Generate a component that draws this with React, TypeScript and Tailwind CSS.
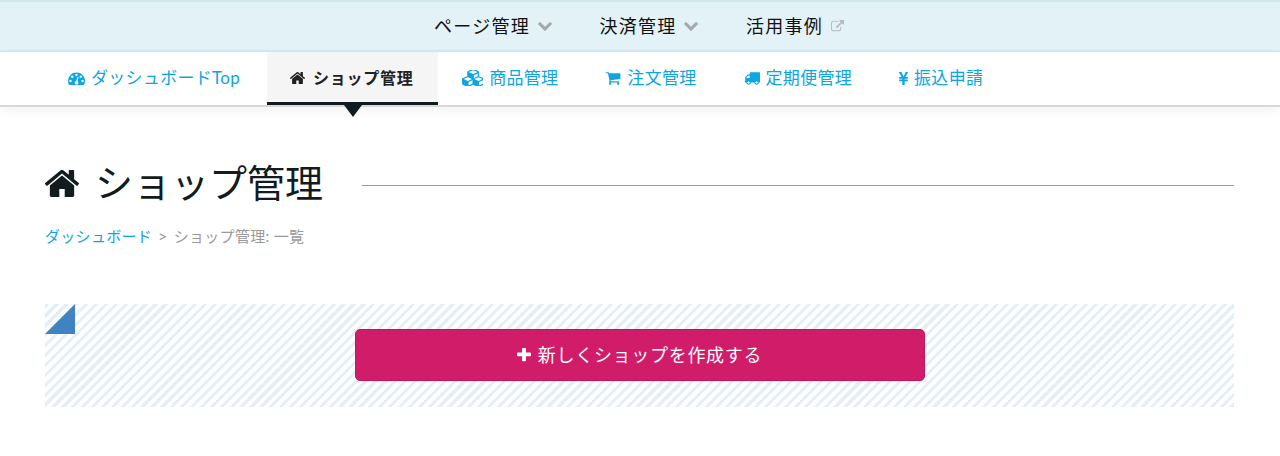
import type { ReactNode } from "react";

const P = {
  home: "M1472 992v480q0 26-19 45t-45 19h-384v-384h-256v384h-384q-26 0-45-19t-19-45v-480q0-1 .5-3t.5-3l575-474 575 474q1 2 1 6zm223-69l-62 74q-8 9-21 11h-3q-13 0-21-7l-692-577-692 577q-12 8-24 7-13-2-21-11l-62-74q-8-10-7-23.5t11-21.5l719-599q32-26 76-26t76 26l244 204v-195q0-14 9-23t23-9h192q14 0 23 9t9 23v408l219 182q10 8 11 21.5t-7 23.5z",
  dash: "M384 1152q0-53-37.5-90.5t-90.5-37.5-90.5 37.5-37.5 90.5 37.5 90.5 90.5 37.5 90.5-37.5 37.5-90.5zm192-448q0-53-37.5-90.5t-90.5-37.5-90.5 37.5-37.5 90.5 37.5 90.5 90.5 37.5 90.5-37.5 37.5-90.5zm428 481l101-382q6-26-7.5-48.5t-38.5-29.5-48 6.5-30 39.5l-101 382q-60 5-107 43.5t-63 98.5q-20 77 20 146t117 89 146-20 89-117q16-60-6-117t-72-91zm660-33q0-53-37.5-90.5t-90.5-37.5-90.5 37.5-37.5 90.5 37.5 90.5 90.5 37.5 90.5-37.5 37.5-90.5zm-640-640q0-53-37.5-90.5t-90.5-37.5-90.5 37.5-37.5 90.5 37.5 90.5 90.5 37.5 90.5-37.5 37.5-90.5zm448 192q0-53-37.5-90.5t-90.5-37.5-90.5 37.5-37.5 90.5 37.5 90.5 90.5 37.5 90.5-37.5 37.5-90.5zm320 448q0 261-141 483-19 29-54 29h-1402q-35 0-54-29-141-221-141-483 0-182 71-348t191-286 286-191 348-71 348 71 286 191 191 286 71 348z",
  cart: "M704 1536q0 52-38 90t-90 38-90-38-38-90 38-90 90-38 90 38 38 90zm896 0q0 52-38 90t-90 38-90-38-38-90 38-90 90-38 90 38 38 90zm128-1088v512q0 24-16.5 42.5t-40.5 21.5l-1044 122q13 60 13 70 0 16-24 64h920q26 0 45 19t19 45-19 45-45 19h-1024q-26 0-45-19t-19-45q0-11 8-31.5t16-36 21.5-40 15.5-29.5l-177-823h-204q-26 0-45-19t-19-45 19-45 45-19h256q16 0 28.5 6.5t19.5 15.5 13 24.5 8 26 5.5 29.5 4.5 26h1201q26 0 45 19t19 45z",
  truck: "M640 1408q0-52-38-90t-90-38-90 38-38 90 38 90 90 38 90-38 38-90zm-384-512h384v-256h-158q-13 0-22 9l-195 195q-9 9-9 22v30zm1280 512q0-52-38-90t-90-38-90 38-38 90 38 90 90 38 90-38 38-90zm256-1088v1024q0 15-4 26.5t-13.5 18.5-16.5 11.5-23.5 6-22.5 2-25.5 0-22.5-.5q0 106-75 181t-181 75-181-75-75-181h-384q0 106-75 181t-181 75-181-75-75-181h-64q-3 0-22.5.5t-25.5 0-22.5-2-23.5-6-16.5-11.5-13.5-18.5-4-26.5q0-26 19-45t45-19v-320q0-8-.5-35t0-38 2.5-34.5 6.5-37 14-30.5 22.5-30l198-198q19-19 50.5-32t58.5-13h160v-192q0-26 19-45t45-19h1024q26 0 45 19t19 45z",
  cubes: "M640 1632l384-192v-314l-384 164v342zm-64-454l404-173-404-173-404 173zm1088 454l384-192v-314l-384 164v342zm-64-454l404-173-404-173-404 173zm-448-293l384-165v-266l-384 164v267zm-64-379l441-189-441-189-441 189zm1088 518v416q0 36-19 67t-52 47l-448 224q-25 14-57 14t-57-14l-448-224q-4-2-7-4-2 2-7 4l-448 224q-25 14-57 14t-57-14l-448-224q-33-16-52-47t-19-67v-416q0-38 21.5-70t56.5-48l434-186v-400q0-38 21.5-70t56.5-48l448-192q23-10 50-10t50 10l448 192q35 16 56.5 48t21.5 70v400l434 186q36 16 57 48t21 70z",
  chevron: "M1683 808l-742 741q-19 19-45 19t-45-19l-742-741q-19-19-19-45.5t19-45.5l166-165q19-19 45-19t45 19l531 531 531-531q19-19 45-19t45 19l166 165q19 19 19 45.5t-19 45.5z",
  ext: "M1408 928v320q0 119-84.5 203.5t-203.5 84.5h-832q-119 0-203.5-84.5t-84.5-203.5v-832q0-119 84.5-203.5t203.5-84.5h704q14 0 23 9t9 23v64q0 14-9 23t-23 9h-704q-66 0-113 47t-47 113v832q0 66 47 113t113 47h832q66 0 113-47t47-113v-320q0-14 9-23t23-9h64q14 0 23 9t9 23zm384-864v512q0 26-19 45t-45 19-45-19l-176-176-652 652q-10 10-23 10t-23-10l-114-114q-10-10-10-23t10-23l652-652-176-176q-19-19-19-45t19-45 45-19h512q26 0 45 19t19 45z",
  plus: "M1600 736v192q0 40-28 68t-68 28h-416v416q0 40-28 68t-68 28h-192q-40 0-68-28t-28-68v-416h-416q-40 0-68-28t-28-68v-192q0-40 28-68t68-28h416v-416q0-40 28-68t68-28h192q40 0 68 28t28 68v416h416q40 0 68 28t28 68z",
  yen: "M985.5 1536h-172q-13 0-22.5-9t-9.5-23v-330h-288q-13 0-22.5-9t-9.5-23v-103q0-13 9.5-22.5t22.5-9.5h288v-85h-288q-13 0-22.5-9t-9.5-23v-104q0-13 9.5-22.5t22.5-9.5h214l-321-578q-8-16 0-32 10-16 28-16h194q19 0 29 18l215 425q19 38 56 125 10-24 30.5-68t27.5-61l191-420q8-19 29-19h191q17 0 27 16 9 14 1 31l-313 579h215q13 0 22.5 9.5t9.5 22.5v104q0 14-9.5 23t-22.5 9h-290v85h290q13 0 22.5 9.5t9.5 22.5v103q0 14-9.5 23t-22.5 9h-290v330q0 13-9.5 22.5t-22.5 9.5z",
};

function Ico({ d, box, className }: { d: string; box: string; className: string }) {
  return (
    <svg viewBox={box} className={className} fill="currentColor" aria-hidden="true">
      <path d={d} />
    </svg>
  );
}

function TopItem({ label, icon }: { label: string; icon: ReactNode }) {
  return (
    <a className="flex items-center gap-2 text-[18px] leading-none tracking-[1.25px] text-[#111]">
      <span>{label}</span>
      {icon}
    </a>
  );
}

function Tab({ icon, label, active }: { icon: ReactNode; label: string; active?: boolean }) {
  if (active) {
    return (
      <a className="relative flex h-[53px] w-[171px] items-center justify-center gap-2 border-b-[3px] border-[#111b20] bg-[#f5f5f5] pr-[2px] pt-[1px] text-[16px] font-bold tracking-[0.75px] text-[#222]">
        {icon}
        <span>{label}</span>
        <span className="absolute left-1/2 top-[53px] -ml-[9px] h-0 w-0 border-x-[9px] border-t-[12px] border-x-transparent border-t-[#111b20]" />
      </a>
    );
  }
  return (
    <a className="flex h-[53px] items-center gap-[6px] pb-[1px] text-[17px] tracking-[0.3px] text-[#0ea5e4]">
      {icon}
      <span>{label}</span>
    </a>
  );
}

export default function App() {
  return (
    <div className="min-h-[456px] bg-white [font-family:Lato,'Noto_Sans_CJK_JP',sans-serif]">
      <header className="flex h-[52px] items-center justify-center gap-[47.5px] border-y-2 border-[#d3e8ee] bg-[#e2f2f7] pr-[2px]">
        <TopItem label="ページ管理" icon={<Ico d={P.chevron} box="90 540 1612 1030" className="h-[9px] w-[14px] text-[#a3a9a9]" />} />
        <TopItem label="決済管理" icon={<Ico d={P.chevron} box="90 540 1612 1030" className="h-[9px] w-[14px] text-[#a3a9a9]" />} />
        <TopItem label="活用事例" icon={<Ico d={P.ext} box="0 0 1792 1792" className="h-[13px] w-[13px] text-[#b5b9b9]" />} />
      </header>
      <nav className="flex h-[55px] items-start border-b-2 border-[#d8d8d8] pl-[68px] shadow-[0_4px_10px_rgba(0,0,0,0.05)]">
        <Tab icon={<Ico d={P.dash} box="0 256 1792 1280" className="h-[13px] w-[17px]" />} label="ダッシュボードTop" />
        <div className="ml-[27px]">
          <Tab active icon={<Ico d={P.home} box="96 256 1600 1280" className="h-[12px] w-[15px]" />} label="ショップ管理" />
        </div>
        <div className="ml-[24px]">
          <Tab icon={<Ico d={P.cubes} box="0 128 2048 1536" className="h-[16px] w-[21px]" />} label="商品管理" />
        </div>
        <div className="ml-[47px]">
          <Tab icon={<Ico d={P.cart} box="0 256 1792 1408" className="h-[13px] w-[16px]" />} label="注文管理" />
        </div>
        <div className="ml-[47px]">
          <Tab icon={<Ico d={P.truck} box="0 256 1792 1408" className="h-[13px] w-[16px]" />} label="定期便管理" />
        </div>
        <div className="ml-[47px]">
          <Tab icon={<Ico d={P.yen} box="450 256 900 1280" className="h-[13px] w-[9px]" />} label="振込申請" />
        </div>
      </nav>
      <main className="pl-[45px] pr-[46px]">
        <div className="flex items-center pt-[49px]">
          <h1 className="flex shrink-0 items-center gap-[16px] text-[38px] font-normal leading-[52px] text-[#111b20]">
            <Ico d={P.home} box="96 256 1600 1280" className="mt-[2px] h-[27px] w-[34px]" />
            <span>ショップ管理</span>
          </h1>
          <div className="ml-[39px] mt-[6px] h-px flex-1 bg-[#9a9a9a]" />
        </div>
        <p className="mt-[18px] flex items-center text-[15px] leading-5 tracking-[0.3px] text-[#999]">
          <a className="text-[#0ea5e4]">ダッシュボード</a>
          <span className="mx-[6px] text-[16px]">&gt;</span>
          <span>ショップ管理: 一覧</span>
        </p>
        <section className="relative mt-[58px] flex h-[103px] items-center justify-center bg-[repeating-linear-gradient(135deg,#e3eef5_0,#e3eef5_3px,#ffffff_3px,#ffffff_7px)]">
          <span className="absolute left-0 top-0 h-0 w-0 border-b-[30px] border-l-[30px] border-b-[#3f83c2] border-l-transparent" />
          <button className="mb-[1px] flex h-[52px] w-[570px] items-center justify-center gap-[7px] rounded-[5px] border border-[#c4145f] bg-[#d01c69] text-[18px] tracking-[0.7px] text-white">
            <Ico d={P.plus} box="192 192 1408 1408" className="h-[14px] w-[14px]" />
            <span>新しくショップを作成する</span>
          </button>
        </section>
      </main>
    </div>
  );
}
